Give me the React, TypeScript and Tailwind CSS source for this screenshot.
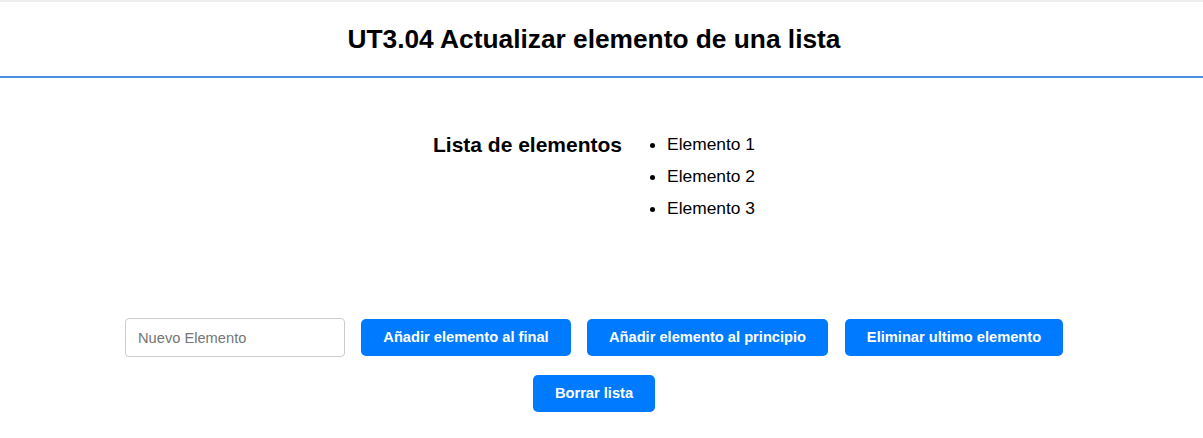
import React from "react";

export default function App() {
  const items = ["Elemento 1", "Elemento 2", "Elemento 3"];
  const btn =
    "h-[37px] rounded-[5px] bg-[#007bff] text-white font-bold text-[14.67px] leading-[17px] whitespace-nowrap flex items-center justify-center";
  return (
    <div className="w-full bg-white text-black" style={{ fontFamily: '"Liberation Sans", Arial, sans-serif' }}>
      <header className="border-t-2 border-[#eeeeee] border-b-2 border-b-[#4a90e2]">
        <div className="w-[1188px] h-[74px] flex items-center justify-center">
          <h1 className="text-[26.3px] leading-[30px] font-bold">UT3.04 Actualizar elemento de una lista</h1>
        </div>
      </header>
      <main className="w-[1188px]">
        <section className="pt-[50px] flex justify-center items-start gap-[5px]">
          <h3 className="mt-[5px] text-[21px] leading-[24px] font-bold">Lista de elementos</h3>
          <ul className="list-disc pl-[40px] text-[17.4px]">
            {items.map((it) => (
              <li key={it} className="h-[32px] leading-[32px]">
                {it}
              </li>
            ))}
          </ul>
        </section>
        <section className="mt-[94px] flex flex-col items-center gap-[18px]">
          <div className="flex items-center justify-center">
            <input
              type="text"
              placeholder="Nuevo Elemento"
              className="w-[220px] h-[39px] border border-[#cccccc] rounded-[4px] px-[12px] text-[14.67px] placeholder:text-[#757575] outline-none"
            />
            <button className={`${btn} w-[210px] ml-[16px]`}>Añadir elemento al final</button>
            <button className={`${btn} w-[241px] ml-[16px]`}>Añadir elemento al principio</button>
            <button className={`${btn} w-[218px] ml-[17px]`}>Eliminar ultimo elemento</button>
          </div>
          <button className={`${btn} w-[122px]`}>Borrar lista</button>
        </section>
      </main>
    </div>
  );
}
